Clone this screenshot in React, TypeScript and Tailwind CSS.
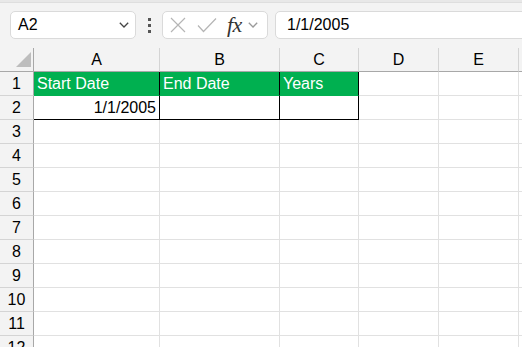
import React from "react";

const cols = [
  { key: "A", w: 126 },
  { key: "B", w: 120 },
  { key: "C", w: 79 },
  { key: "D", w: 80 },
  { key: "E", w: 80 },
  { key: "F", w: 40 },
];

const rows = [1, 2, 3, 4, 5, 6, 7, 8, 9, 10, 11, 12];

const Chevron = ({ className }: { className?: string }) => (
  <svg className={className} width="10" height="6" viewBox="0 0 10 6" fill="none">
    <path d="M0.8 0.8 L5 5 L9.2 0.8" stroke="currentColor" strokeWidth="1.3" />
  </svg>
);

const App: React.FC = () => {
  const cellContent = (r: number, c: string) => {
    if (r === 1) {
      if (c === "A") return "Start Date";
      if (c === "B") return "End Date";
      if (c === "C") return "Years";
    }
    if (r === 2 && c === "A") return "1/1/2005";
    return "";
  };

  return (
    <div
      className="w-[522px] h-[347px] overflow-hidden bg-white text-black"
      style={{ fontFamily: '"Liberation Sans", Arial, sans-serif' }}
    >
      {/* toolbar */}
      <div className="h-[48px] bg-[#f3f3f3] flex flex-col">
        <div className="h-[3px] bg-[#e8e8e8] border-b border-[#dedede]" />
        <div className="flex items-start pt-[8px] pl-[10px]">
          {/* name box */}
          <div className="w-[126px] h-[28px] shrink-0 rounded-[5px] border border-[#dadada] bg-white flex items-center pl-[7px] pr-[6px]">
            <span className="text-[16px] leading-none flex-1">A2</span>
            <Chevron className="text-[#444]" />
          </div>
          {/* dots */}
          <div className="w-[26px] h-[28px] shrink-0 flex flex-col items-center justify-center gap-[3px]">
            <div className="w-[3px] h-[3px] bg-[#555]" />
            <div className="w-[3px] h-[3px] bg-[#555]" />
            <div className="w-[3px] h-[3px] bg-[#555]" />
          </div>
          {/* formula buttons */}
          <div className="w-[106px] h-[28px] shrink-0 rounded-[5px] border border-[#dadada] bg-white flex items-center pl-[7px]">
            <svg width="16" height="16" viewBox="0 0 16 16" fill="none" className="text-[#b5b5b5]">
              <path d="M1 1 L15 15 M15 1 L1 15" stroke="currentColor" strokeWidth="1.2" />
            </svg>
            <svg width="20" height="16" viewBox="0 0 20 16" fill="none" className="ml-[11px] text-[#b5b5b5]">
              <path d="M1 8.5 L6.5 14.5 L19 1.5" stroke="currentColor" strokeWidth="1.2" />
            </svg>
            <span
              className="ml-[10px] text-[22px] leading-none italic text-[#333] tracking-[-0.5px]"
              style={{ fontFamily: '"Liberation Serif", "Times New Roman", serif' }}
            >
              fx
            </span>
            <Chevron className="ml-[6px] text-[#9a9a9a]" />
          </div>
          {/* formula input */}
          <div className="ml-[7px] w-[300px] h-[28px] shrink-0 rounded-[5px] border border-[#dadada] bg-white flex items-center pl-[11px]">
            <span className="text-[16px] leading-none">1/1/2005</span>
          </div>
        </div>
      </div>

      {/* column headers */}
      <div className="flex h-[24px] bg-[#f3f3f3]">
        <div className="w-[34px] shrink-0 border-r border-b border-[#a8a8a8] flex items-end justify-end pr-[2px] pb-[4px]">
          <svg width="15" height="15" viewBox="0 0 15 15">
            <path d="M15 0 L15 15 L0 15 Z" fill="#bdbdbd" />
          </svg>
        </div>
        {cols.map((c) => (
          <div
            key={c.key}
            style={{ width: c.w }}
            className="shrink-0 border-r border-b border-r-[#d4d4d4] border-b-[#a8a8a8] flex items-center justify-center text-[16px] pt-[1px]"
          >
            {c.key !== "F" ? c.key : ""}
          </div>
        ))}
      </div>

      {/* rows */}
      {rows.map((r) => (
        <div key={r} className="flex h-[24px]">
          <div className="w-[34px] shrink-0 bg-[#f3f3f3] border-r border-b border-r-[#a8a8a8] border-b-[#d4d4d4] flex items-center justify-center text-[16px] pt-[1px]">
            {r}
          </div>
          {cols.map((c, i) => {
            const inTable = r <= 2 && i < 3;
            const header = r === 1 && i < 3;
            const text = cellContent(r, c.key);
            return (
              <div
                key={c.key}
                style={{ width: c.w }}
                className={
                  "shrink-0 border-r border-b flex items-center text-[16px] pt-[1px] px-[3px] " +
                  (header
                    ? "bg-[#00b050] text-white border-r-black border-b-[#00b050] "
                    : inTable
                    ? "border-r-black border-b-black "
                    : "border-r-[#e1e1e1] border-b-[#e1e1e1] ") +
                  (r === 2 && c.key === "A" ? "justify-end" : "justify-start")
                }
              >
                {text}
              </div>
            );
          })}
        </div>
      ))}
    </div>
  );
};

export default App;
